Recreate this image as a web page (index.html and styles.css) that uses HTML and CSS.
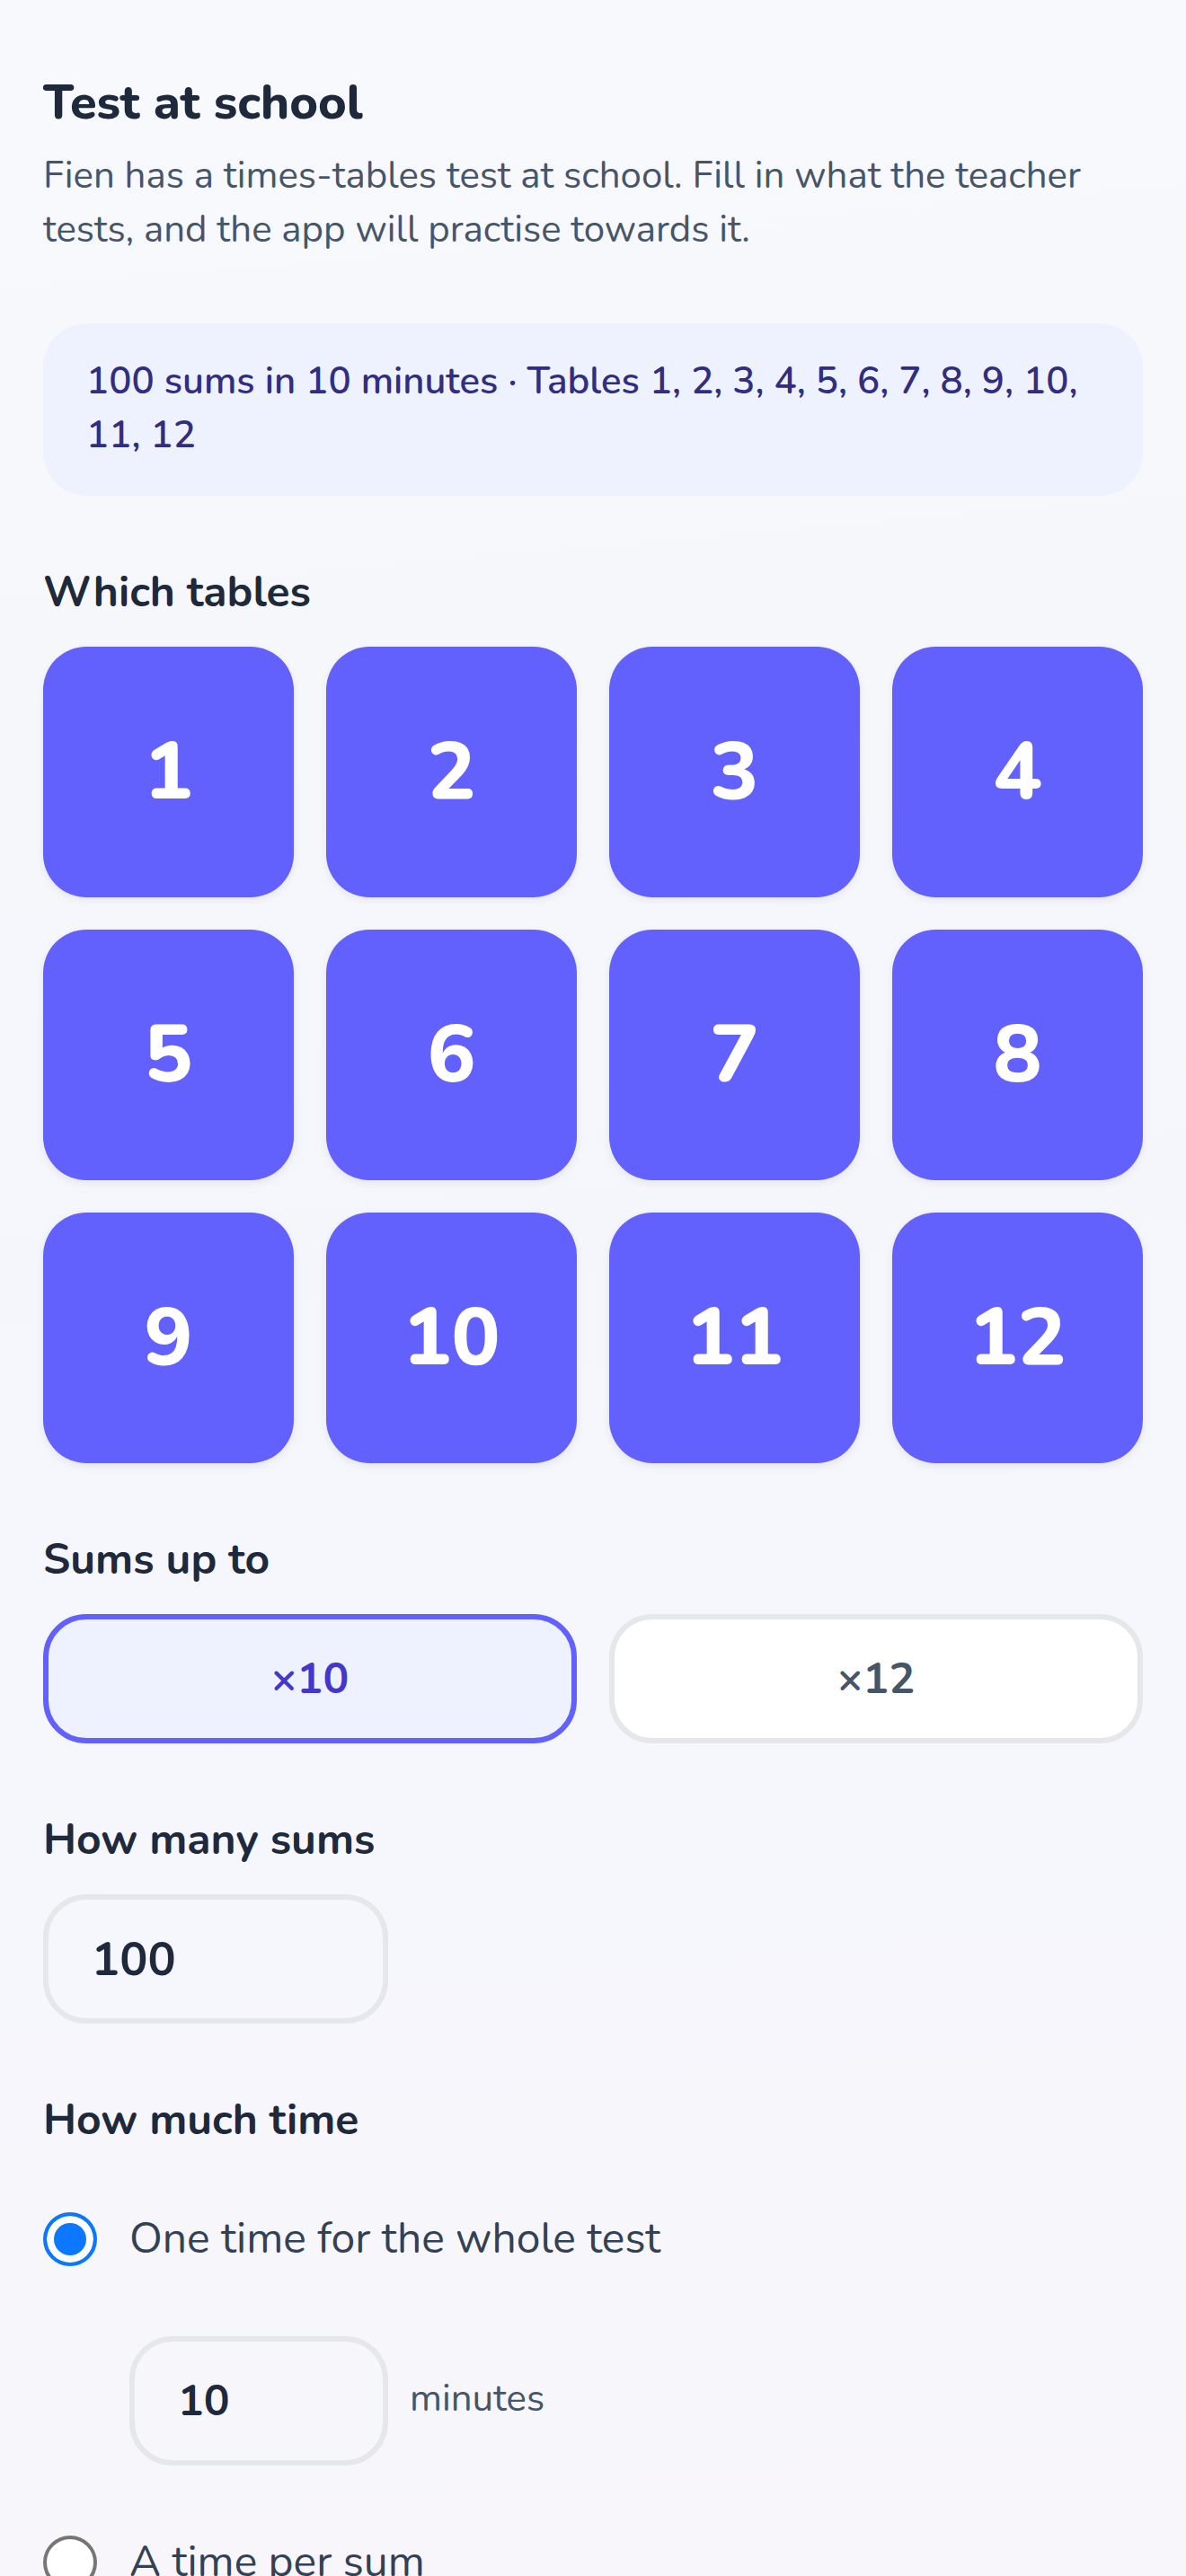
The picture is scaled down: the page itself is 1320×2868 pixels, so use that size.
FILE: index.html
```html
<!DOCTYPE html>
<html lang="en">
<head>
<meta charset="utf-8">
<title>Test at school</title>
<link rel="stylesheet" href="styles.css">
</head>
<body>
<main class="page">
  <h1 class="title">Test at school</h1>
  <p class="lead">Fien has a times-tables test at school. Fill in what the teacher tests, and the app will practise towards it.</p>

  <div class="summary">100 sums in 10 minutes · Tables 1, 2, 3, 4, 5, 6, 7, 8, 9, 10, 11, 12</div>

  <h2 class="label">Which tables</h2>
  <div class="tiles">
    <button class="tile">1</button>
    <button class="tile">2</button>
    <button class="tile">3</button>
    <button class="tile">4</button>
    <button class="tile">5</button>
    <button class="tile">6</button>
    <button class="tile">7</button>
    <button class="tile">8</button>
    <button class="tile">9</button>
    <button class="tile">10</button>
    <button class="tile">11</button>
    <button class="tile">12</button>
  </div>

  <h2 class="label">Sums up to</h2>
  <div class="seg">
    <button class="seg-btn is-on">×10</button>
    <button class="seg-btn">×12</button>
  </div>

  <h2 class="label">How many sums</h2>
  <input class="field field-count" type="text" value="100">

  <h2 class="label">How much time</h2>
  <label class="choice choice-first">
    <input class="radio" type="radio" name="time" checked>
    <span class="choice-text">One time for the whole test</span>
  </label>
  <div class="minutes-row">
    <input class="field field-minutes" type="text" value="10">
    <span class="unit">minutes</span>
  </div>
  <label class="choice choice-second">
    <input class="radio" type="radio" name="time">
    <span class="choice-text">A time per sum</span>
  </label>
</main>
</body>
</html>
```

FILE: styles.css
```css
* {
  box-sizing: border-box;
}

html, body {
  margin: 0;
  padding: 0;
}

body {
  min-height: 100vh;
  background: linear-gradient(175deg, #f8f9fb 0%, #f5f6fb 45%, #f6f6fc 75%, #f9f6fa 100%);
  font-family: "Nunito", "Lato", "Noto Sans", sans-serif;
  color: #1e293b;
}

.page {
  padding: 82px 48px 120px;
}

.title {
  margin: 0;
  font-size: 54px;
  line-height: 64px;
  font-weight: 800;
  color: #1e293b;
}

.lead {
  margin: 20px 0 0;
  font-size: 42px;
  line-height: 60px;
  color: #475569;
}

.summary {
  margin-top: 74px;
  padding: 35px 48px 37px;
  background: #eef2ff;
  border-radius: 48px;
  color: #312e81;
  font-size: 42px;
  line-height: 60px;
  font-weight: 600;
}

.label {
  margin: 78px 0 0;
  font-size: 48px;
  line-height: 58px;
  font-weight: 700;
  color: #1e293b;
}

.tiles {
  margin-top: 32px;
  display: grid;
  grid-template-columns: repeat(4, 1fr);
  gap: 36px;
}

.tile {
  aspect-ratio: 1 / 1;
  border: none;
  border-radius: 48px;
  background: #6361fe;
  color: #ffffff;
  font-family: inherit;
  font-size: 90px;
  font-weight: 800;
  display: flex;
  align-items: center;
  justify-content: center;
  padding: 0;
  box-shadow: 0 3px 8px rgba(30, 41, 59, 0.08);
}

.seg {
  margin-top: 32px;
  display: grid;
  grid-template-columns: 1fr 1fr;
  gap: 36px;
}

.seg-btn {
  height: 144px;
  border: 6px solid #e5e7eb;
  border-radius: 48px;
  background: #ffffff;
  color: #475569;
  font-family: inherit;
  font-size: 48px;
  font-weight: 700;
  padding: 0;
}

.seg-btn.is-on {
  border-color: #6361fe;
  background: #eef2ff;
  color: #4338ca;
}

.field {
  display: block;
  height: 144px;
  border: 6px solid #e5e7eb;
  border-radius: 48px;
  background: transparent;
  color: #1e293b;
  font-family: inherit;
  font-weight: 700;
  padding: 0 0 0 48px;
  outline: none;
}

.field-count {
  margin-top: 32px;
  width: 384px;
  font-size: 52px;
}

.field-minutes {
  width: 288px;
  font-size: 48px;
}

.choice {
  display: flex;
  align-items: center;
  gap: 36px;
  height: 68px;
}

.choice-first {
  margin-top: 70px;
}

.choice-second {
  margin-top: 74px;
}

.choice-text {
  font-size: 48px;
  line-height: 60px;
  padding-bottom: 3px;
  color: #334155;
}

.radio {
  appearance: none;
  -webkit-appearance: none;
  margin: 0;
  flex: 0 0 auto;
  width: 60px;
  height: 60px;
  border-radius: 50%;
  border: 4px solid #767676;
  background: #ffffff;
}

.radio:checked {
  border-color: #0b78ff;
  background: #0b78ff;
  box-shadow: inset 0 0 0 8px #ffffff;
}

.minutes-row {
  margin: 74px 0 0 96px;
  display: flex;
  align-items: center;
  gap: 24px;
}

.unit {
  font-size: 42px;
  line-height: 60px;
  padding-bottom: 4px;
  color: #475569;
}
```
